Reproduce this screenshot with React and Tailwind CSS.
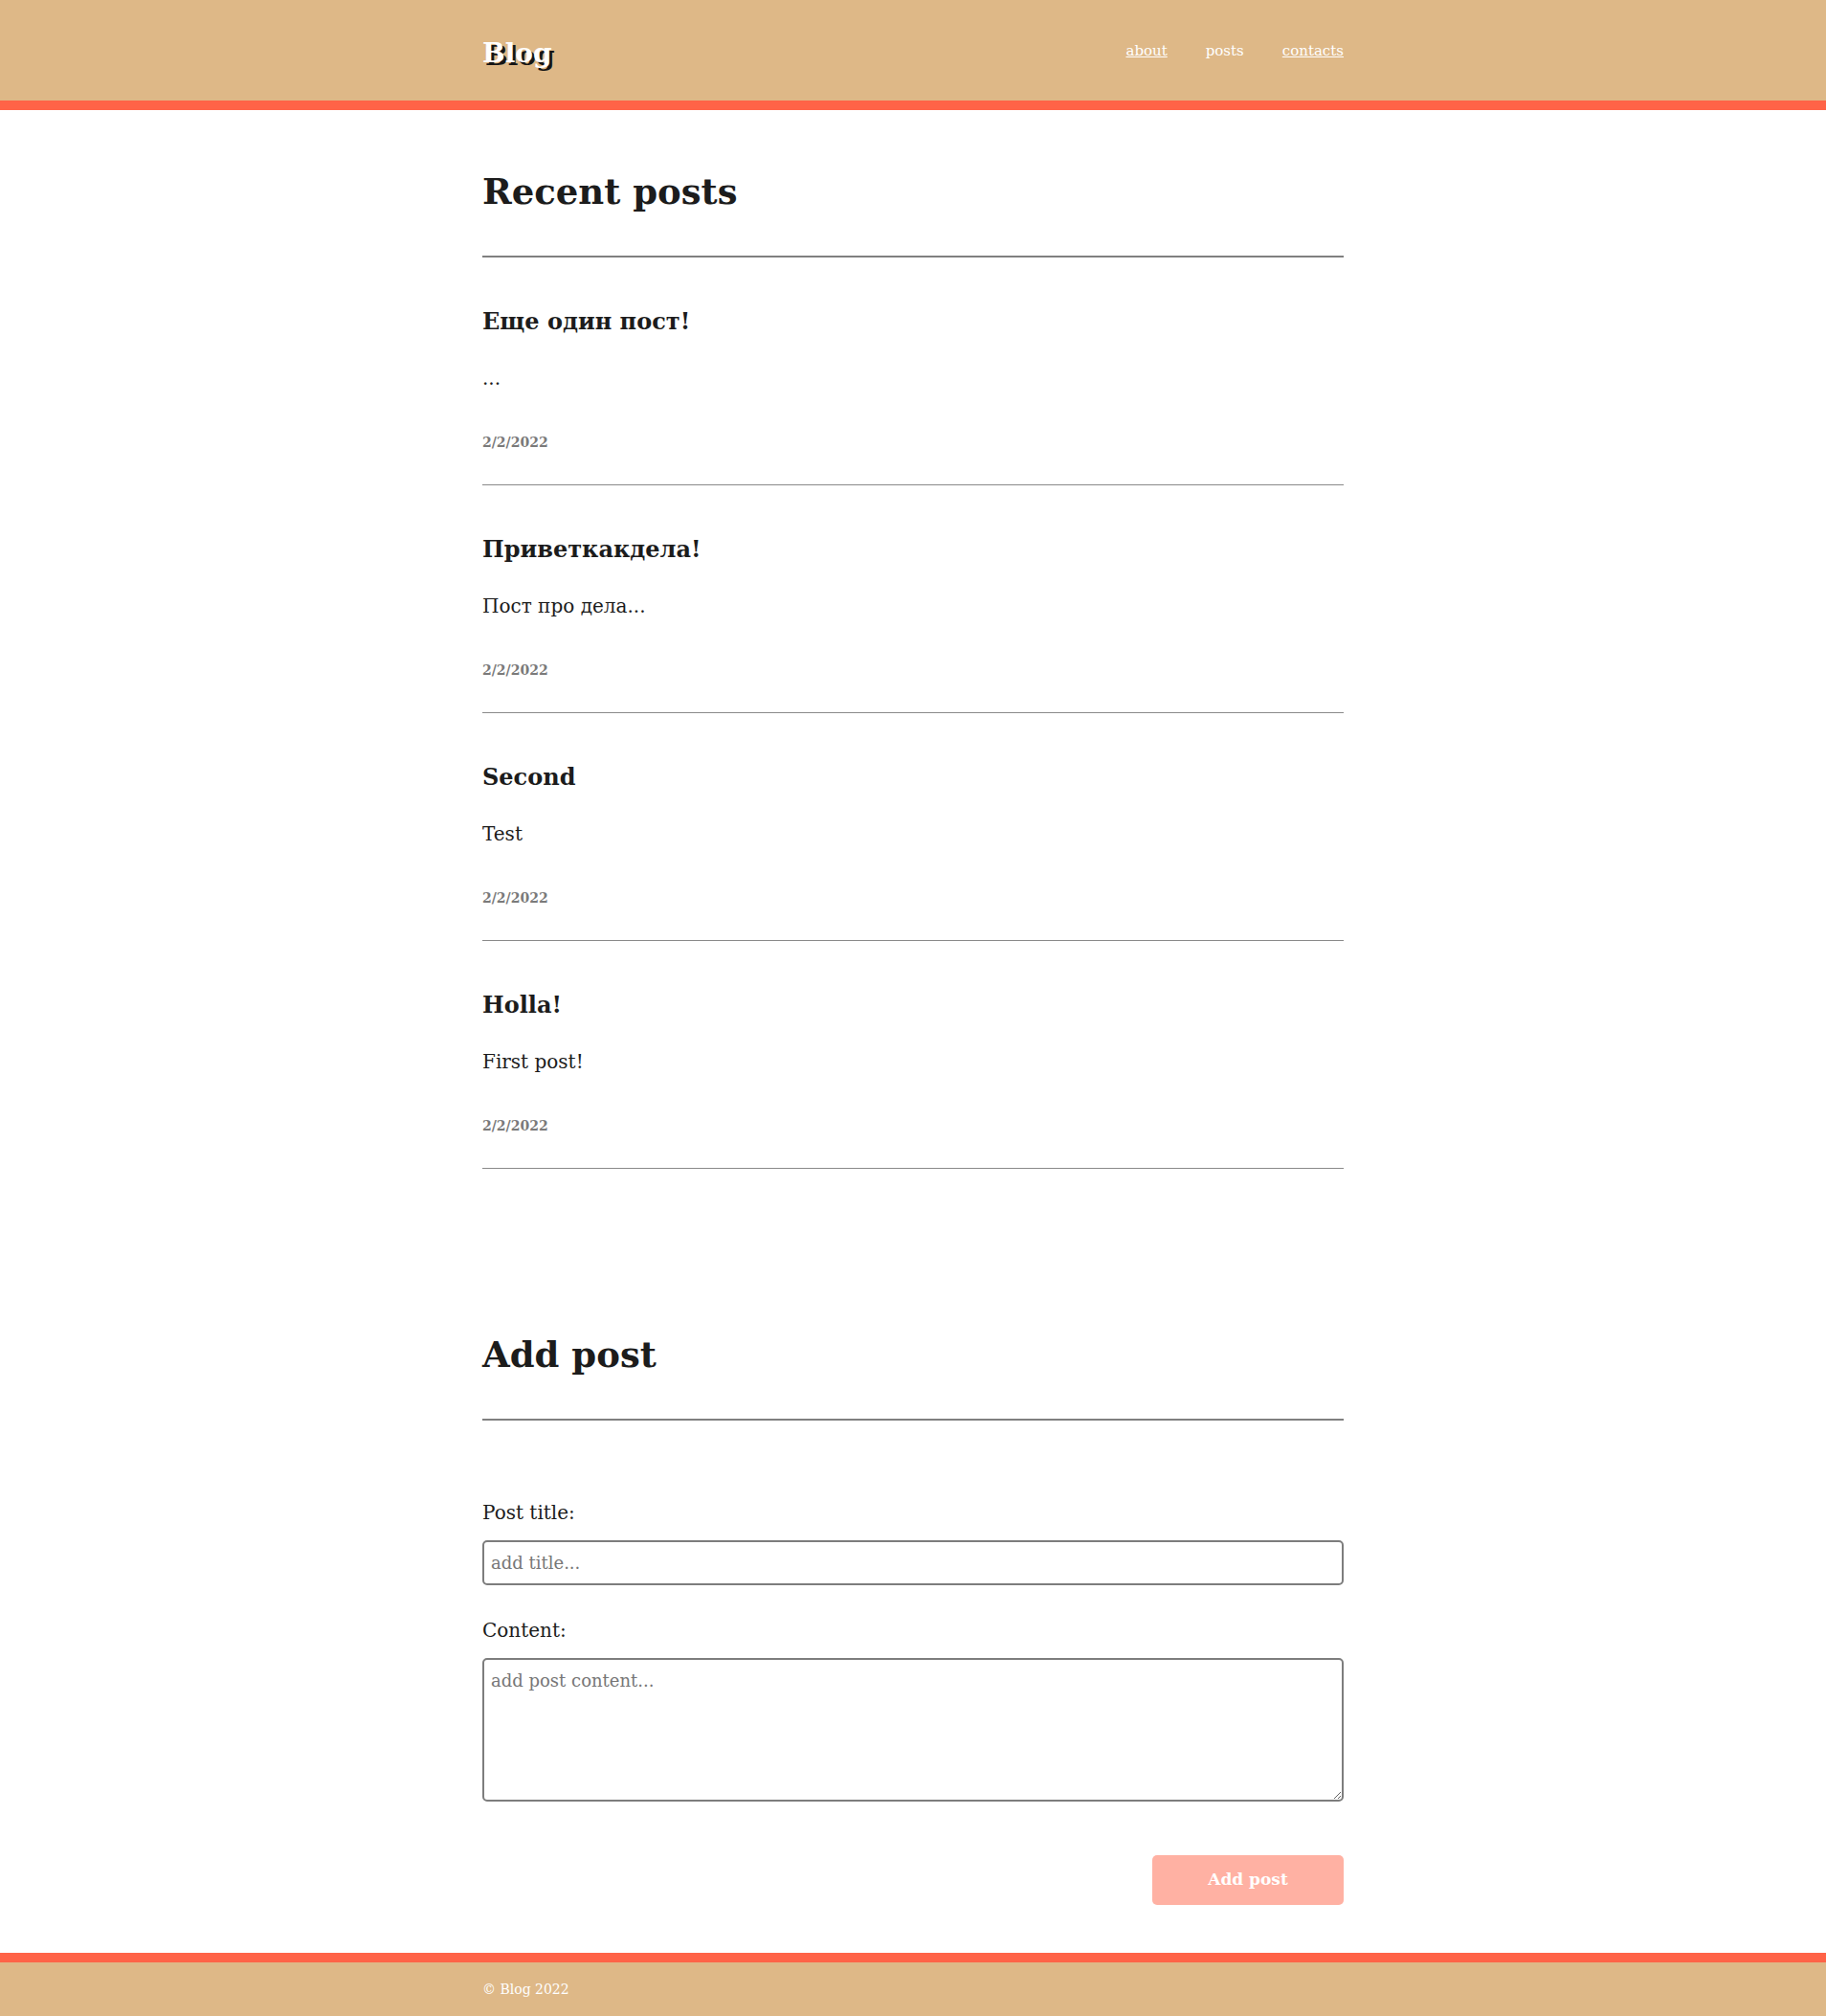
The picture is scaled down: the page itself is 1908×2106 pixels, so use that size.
import React from "react";

const posts = [
  { title: "Еще один пост!", body: "...", date: "2/2/2022" },
  { title: "Приветкакдела!", body: "Пост про дела...", date: "2/2/2022" },
  { title: "Second", body: "Test", date: "2/2/2022" },
  { title: "Holla!", body: "First post!", date: "2/2/2022" },
];

const Header = () => (
  <header className="h-[115px] bg-[#deb887] border-b-[10px] border-[#ff6347]">
    <div className="max-w-[900px] mx-auto h-full flex items-center justify-between">
      <a className="text-[28px] font-bold text-white leading-none pt-[6px] [text-shadow:3px_3px_0_#151515]">
        Blog
      </a>
      <nav className="flex gap-[40px] text-[15px] text-white pt-[2px]">
        <a className="underline">about</a>
        <a>posts</a>
        <a className="underline">contacts</a>
      </nav>
    </div>
  </header>
);

const PostItem = ({ post }) => (
  <div className="pt-[51px] pb-[34px] border-b border-[#8a8a8a]">
    <h2 className="text-[24px] leading-[32px] font-bold text-[#1c1c1c]">
      {post.title}
    </h2>
    <p className="mt-[29px] text-[20px] leading-[28px] text-[#1c1c1c]">
      {post.body}
    </p>
    <div className="mt-[43px] text-[14px] leading-[20px] font-bold text-[#7a7a7a]">
      {post.date}
    </div>
  </div>
);

export default function App() {
  return (
    <div className="min-h-screen flex flex-col bg-white font-['DejaVu_Serif',serif]">
      <Header />
      <main className="w-[900px] mx-auto">
        <section className="pt-[62px]">
          <h1 className="text-[37px] leading-[46px] font-bold text-[#1c1c1c]">
            Recent posts
          </h1>
          <div className="mt-[44px] h-[2px] bg-[#808080]" />
          {posts.map((post, i) => (
            <PostItem key={i} post={post} />
          ))}
        </section>

        <section className="pt-[171px]">
          <h1 className="text-[37px] leading-[46px] font-bold text-[#1c1c1c]">
            Add post
          </h1>
          <div className="mt-[44px] h-[2px] bg-[#808080]" />
          <form className="pt-[82px] flex flex-col">
            <label className="text-[20px] leading-[28px] text-[#1c1c1c]">
              Post title:
            </label>
            <input
              className="mt-[15px] h-[47px] border-2 border-[#7d7d7d] rounded-[5px] px-[7px] text-[18px] text-[#1c1c1c] placeholder:text-[#777] outline-none"
              placeholder="add title..."
            />
            <label className="mt-[33px] text-[20px] leading-[28px] text-[#1c1c1c]">
              Content:
            </label>
            <textarea
              className="mt-[15px] h-[150px] border-2 border-[#7d7d7d] rounded-[5px] px-[7px] py-[8px] text-[18px] text-[#1c1c1c] placeholder:text-[#777] outline-none"
              placeholder="add post content..."
            />
            <div className="mt-[56px] flex justify-end">
              <button
                type="button"
                disabled
                className="w-[200px] h-[52px] rounded-[5px] bg-[#ffb1a3] text-white text-[17px] font-bold"
              >
                Add post
              </button>
            </div>
          </form>
        </section>
      </main>
      <footer className="mt-auto h-[66px] bg-[#deb887] border-t-[10px] border-[#ff6347]">
        <div className="max-w-[900px] mx-auto h-full flex items-center text-[14px] text-white">
          © Blog 2022
        </div>
      </footer>
    </div>
  );
}
